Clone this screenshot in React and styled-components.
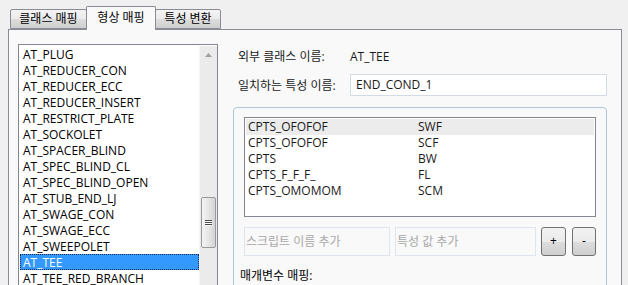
import React from 'react';
import styled, { createGlobalStyle } from 'styled-components';

const GlobalStyle = createGlobalStyle`
  html, body {
    margin: 0;
    padding: 0;
    background: #f0f0f0;
    overflow: hidden;
  }
  body {
    font-family: 'Open Sans', 'Noto Sans CJK KR', sans-serif;
    font-size: 12px;
    color: #000;
  }
`;

const classes = [
  'AT_PLUG',
  'AT_REDUCER_CON',
  'AT_REDUCER_ECC',
  'AT_REDUCER_INSERT',
  'AT_RESTRICT_PLATE',
  'AT_SOCKOLET',
  'AT_SPACER_BLIND',
  'AT_SPEC_BLIND_CL',
  'AT_SPEC_BLIND_OPEN',
  'AT_STUB_END_LJ',
  'AT_SWAGE_CON',
  'AT_SWAGE_ECC',
  'AT_SWEEPOLET',
  'AT_TEE',
  'AT_TEE_RED_BRANCH',
];

const mappings = [
  ['CPTS_OFOFOF', 'SWF'],
  ['CPTS_OFOFOF', 'SCF'],
  ['CPTS', 'BW'],
  ['CPTS_F_F_F_', 'FL'],
  ['CPTS_OMOMOM', 'SCM'],
];

const Page = styled.div`
  padding: 6px 0 0 8px;
  width: 614px;
`;

const TabStrip = styled.div`
  display: flex;
  align-items: flex-end;
  height: 23px;
  padding-left: 2px;
`;

const Tab = styled.div`
  box-sizing: border-box;
  width: ${p => p.$w}px;
  height: ${p => (p.$active ? 24 : 20)}px;
  margin-bottom: ${p => (p.$active ? -1 : 0)}px;
  margin-left: ${p => (p.$first ? 0 : -1)}px;
  border: 1px solid #898c95;
  border-bottom: ${p => (p.$active ? 'none' : '1px solid #898c95')};
  border-radius: 2px 2px 0 0;
  background: ${p => (p.$active ? '#f9f9f9' : 'linear-gradient(#f3f3f3, #ebebeb 50%, #dddddd 51%, #cfcfcf)')};
  display: flex;
  align-items: ${p => (p.$active ? 'flex-start' : 'center')};
  padding-top: ${p => (p.$active ? 3 : 0)}px;
  justify-content: center;
  line-height: 16px;
  position: relative;
  z-index: ${p => (p.$active ? 2 : 1)};
`;

const Panel = styled.div`
  box-sizing: border-box;
  height: 270px;
  border: 1px solid #898c95;
  background: #f9f9f9;
  padding: 14px 0 0 9px;
  display: flex;
  gap: 15px;
`;

const ListBox = styled.div`
  box-sizing: border-box;
  width: 200px;
  height: 260px;
  border: 1px solid #828790;
  background: #fff;
  display: flex;
  padding: 1px 0 0 1px;
`;

const Items = styled.div`
  flex: 1;
  display: flex;
  flex-direction: column;
`;

const Item = styled.div`
  box-sizing: border-box;
  height: 16px;
  line-height: 15px;
  padding-left: 2px;
  white-space: nowrap;
  color: ${p => (p.$selected ? '#fff' : '#000')};
  background: ${p => (p.$selected ? '#3399ff' : 'transparent')};
  border: 1px dotted ${p => (p.$selected ? '#1a2a55' : 'transparent')};
`;

const ScrollBar = styled.div`
  width: 17px;
  background: #ebebeb;
  border-left: 1px solid #f4f4f4;
  display: flex;
  flex-direction: column;
  align-items: center;
`;

const ArrowButton = styled.div`
  height: 17px;
  width: 17px;
  display: flex;
  align-items: center;
  justify-content: center;
`;

const Thumb = styled.div`
  box-sizing: border-box;
  margin-top: 134px;
  width: 15px;
  height: 51px;
  border: 1px solid #9a9a9a;
  border-radius: 2px;
  background: linear-gradient(90deg, #f4f4f4, #e6e6e6 50%, #d4d4d4);
  display: flex;
  flex-direction: column;
  align-items: center;
  justify-content: center;
  gap: 1px;
`;

const Grip = styled.div`
  width: 7px;
  height: 1px;
  background: #4a4a4a;
  box-shadow: 0 1px 0 #fff;
`;

const Right = styled.div`
  width: 374px;
  display: flex;
  flex-direction: column;
`;

const FieldRow = styled.div`
  display: flex;
  align-items: center;
  height: ${p => p.$h}px;
  margin-top: ${p => p.$mt || 0}px;
  padding-left: 5px;
`;

const Label = styled.div`
  width: 112px;
  color: #1a1a1a;
`;

const Value = styled.div`
  color: #1a1a1a;
`;

const TextBox = styled.div`
  box-sizing: border-box;
  width: 257px;
  height: 22px;
  border: 1px solid #d5dbe2;
  background: #fff;
  padding-left: 5px;
  display: flex;
  align-items: center;
  color: #1a1a1a;
`;

const Group = styled.div`
  box-sizing: border-box;
  margin-top: 11px;
  height: 200px;
  border: 1px solid #b0c4d8;
  border-radius: 4px;
  padding: 9px 10px 0 10px;
`;

const ListView = styled.div`
  box-sizing: border-box;
  width: 352px;
  height: 100px;
  border: 1px solid #828790;
  background: #fff;
  padding: 1px;
`;

const Row = styled.div`
  display: flex;
  height: 16px;
  line-height: 16px;
  padding-left: 2px;
  background: ${p => (p.$hot ? '#ececec' : 'transparent')};
`;

const Cell = styled.div`
  width: ${p => p.$w}px;
  color: #1a1a1a;
`;

const InputRow = styled.div`
  display: flex;
  gap: 5px;
  margin-top: 10px;
  height: 29px;
`;

const Placeholder = styled.div`
  box-sizing: border-box;
  width: ${p => p.$w}px;
  border: 1px solid #dfe5ec;
  display: flex;
  align-items: center;
  color: #a8a8a8;
  padding-left: 1px;
`;

const Button = styled.div`
  box-sizing: border-box;
  width: ${p => p.$w}px;
  margin-left: ${p => p.$ml || 0}px;
  border: 1px solid #707070;
  border-radius: 3px;
  background: linear-gradient(#f2f2f2, #ebebeb 50%, #dddddd 51%, #cfcfcf);
  display: flex;
  align-items: center;
  justify-content: center;
  font-size: 12px;
  line-height: 12px;
  color: #000;
`;

const SubLabel = styled.div`
  margin-top: 12px;
  margin-left: -4px;
  line-height: 16px;
  color: #000;
`;

export default function App() {
  const selected = 'AT_TEE';
  return (
    <>
      <GlobalStyle />
      <Page>
        <TabStrip>
          <Tab $w={77} $first>클래스 매핑</Tab>
          <Tab $w={70} $active>형상 매핑</Tab>
          <Tab $w={66}>특성 변환</Tab>
        </TabStrip>
        <Panel>
          <ListBox>
            <Items>
              {classes.map(c => (
                <Item key={c} $selected={c === selected}>
                  {c}
                </Item>
              ))}
            </Items>
            <ScrollBar>
              <ArrowButton>
                <svg width="7" height="4" viewBox="0 0 7 4">
                  <path d="M0 4 L3.5 0 L7 4 Z" fill="#a0a0a0" />
                </svg>
              </ArrowButton>
              <Thumb>
                <Grip />
                <Grip />
                <Grip />
              </Thumb>
            </ScrollBar>
          </ListBox>
          <Right>
            <FieldRow $h={26}>
              <Label>외부 클래스 이름:</Label>
              <Value>AT_TEE</Value>
            </FieldRow>
            <FieldRow $h={22} $mt={5}>
              <Label>일치하는 특성 이름:</Label>
              <TextBox>END_COND_1</TextBox>
            </FieldRow>
            <Group>
              <ListView>
                {mappings.map(([a, b], i) => (
                  <Row key={i} $hot={i === 0}>
                    <Cell $w={170}>{a}</Cell>
                    <Cell>{b}</Cell>
                  </Row>
                ))}
              </ListView>
              <InputRow>
                <Placeholder $w={146}>스크립트 이름 추가</Placeholder>
                <Placeholder $w={141}>특성 값 추가</Placeholder>
                <Button $w={25}>+</Button>
                <Button $w={24} $ml={1}>-</Button>
              </InputRow>
              <SubLabel>매개변수 매핑:</SubLabel>
            </Group>
          </Right>
        </Panel>
      </Page>
    </>
  );
}
